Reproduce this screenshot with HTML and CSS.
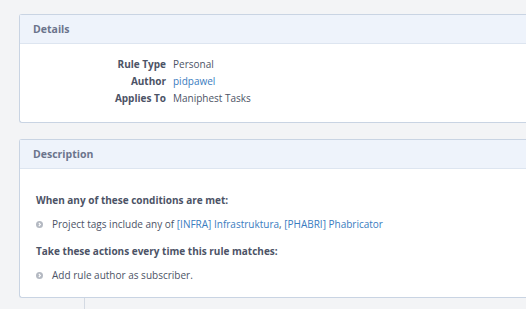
FILE: index.html
```html
<!DOCTYPE html>
<html>
<head>
<meta charset="utf-8">
<link rel="stylesheet" href="styles.css">
</head>
<body>
<div class="page">
  <section class="panel">
    <div class="panel-header">Details</div>
    <div class="panel-body details-body">
      <dl class="props">
        <dt>Rule Type</dt><dd>Personal</dd>
        <dt>Author</dt><dd><a class="link" href="#">pidpawel</a></dd>
        <dt>Applies To</dt><dd>Maniphest Tasks</dd>
      </dl>
    </div>
  </section>
  <section class="panel panel-desc">
    <div class="panel-header">Description</div>
    <div class="panel-body desc-body">
      <div class="desc-title">When any of these conditions are met:</div>
      <div class="desc-item">
        <svg class="bullet" width="7" height="7" viewBox="0 0 14 14"><circle cx="7" cy="7" r="7" fill="#b4b9c2"/><path d="M5.6 3.8 L8.8 7 L5.6 10.2" fill="none" stroke="#fff" stroke-width="2.2"/></svg>
        <span>Project tags include any of <a class="link" href="#">[INFRA] Infrastruktura</a>, <a class="link" href="#">[PHABRI] Phabricator</a></span>
      </div>
      <div class="desc-title">Take these actions every time this rule matches:</div>
      <div class="desc-item">
        <svg class="bullet" width="7" height="7" viewBox="0 0 14 14"><circle cx="7" cy="7" r="7" fill="#b4b9c2"/><path d="M5.6 3.8 L8.8 7 L5.6 10.2" fill="none" stroke="#fff" stroke-width="2.2"/></svg>
        <span>Add rule author as subscriber.</span>
      </div>
    </div>
  </section>
  <div class="timeline"></div>
</div>
</body>
</html>
```
FILE: styles.css
```css
html, body {
  margin: 0;
  padding: 0;
  background: #f3f4f6;
  overflow: hidden;
  height: 100%;
}
body {
  font-family: "Open Sans", "Noto Sans", sans-serif;
  font-size: 10px;
  color: #4c5366;
}
.page {
  padding: 14px 0 0 19px;
}
.panel {
  background: #fff;
  border: 1px solid #c9d4e3;
  border-right: 0;
  border-radius: 3px 0 0 3px;
}
.panel-desc {
  margin-top: 16px;
}
.panel-header {
  height: 29px;
  background: #eef3fb;
  border-bottom: 1px solid #dde5f0;
  box-sizing: border-box;
  padding-left: 13px;
  display: flex;
  align-items: center;
  font-weight: 700;
  font-size: 10.5px;
  color: #6b748c;
}
.details-body {
  height: 78px;
  box-sizing: border-box;
  padding-top: 12px;
}
.props {
  margin: 0;
  display: grid;
  grid-template-columns: 146px auto;
  column-gap: 7px;
  line-height: 17px;
}
.props dt {
  text-align: right;
  font-weight: 700;
  color: #4c5366;
}
.props dd {
  margin: 0;
  color: #4c5366;
}
.link {
  color: #3a7cc0;
  text-decoration: none;
}
.desc-body {
  height: 128px;
  box-sizing: border-box;
  padding: 23px 0 0 16px;
  line-height: 17px;
}
.desc-title {
  font-weight: 700;
  color: #4c5366;
}
.desc-item {
  display: flex;
  align-items: center;
  gap: 9px;
  margin: 7px 0 10px;
}
.bullet {
  flex: none;
}
.timeline {
  margin-left: 65px;
  height: 20px;
  border-left: 1px solid #d4dae3;
}
```
